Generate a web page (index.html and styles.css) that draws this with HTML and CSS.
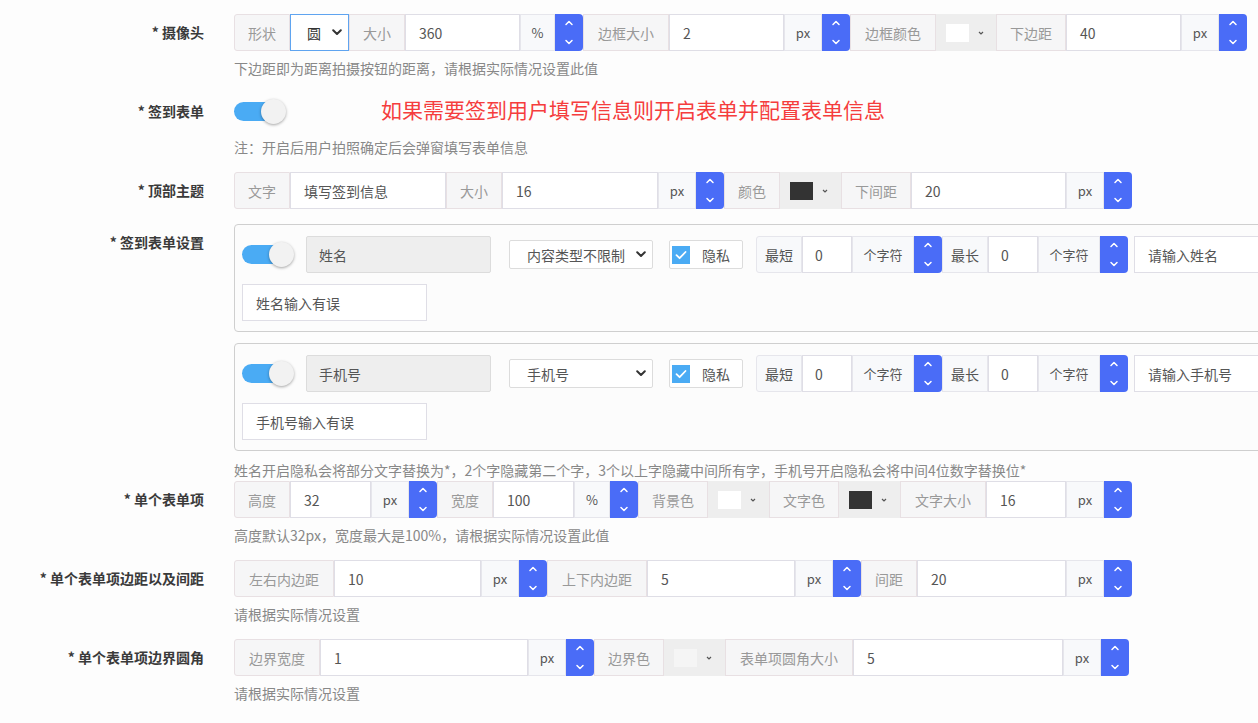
FILE: index.html
```html
<!DOCTYPE html>
<html lang="zh-CN">
<head>
<meta charset="utf-8">
<title>签到设置</title>
<link rel="stylesheet" href="styles.css">
</head>
<body>
<div class="form">

  <div class="row">
    <div class="lbl">* 摄像头</div>
    <div class="ctl">
      <div class="ig">
        <span class="ad first">形状</span>
        <span class="sel w59">圆<svg class="chev" width="10" height="7" viewBox="0 0 10 7"><path d="M1.2 1.2 L5 5 L8.8 1.2"/></svg></span>
        <span class="ad">大小</span>
        <span class="in w115">360</span>
        <span class="un w35">%</span>
        <span class="sp"><svg width="28" height="37" viewBox="0 0 28 37"><path d="M11 10.5 L14 7.5 L17 10.5"/><path d="M11 26.5 L14 29.5 L17 26.5"/></svg></span>
        <span class="ad a4">边框大小</span>
        <span class="in w115">2</span>
        <span class="un">px</span>
        <span class="sp"><svg width="28" height="37" viewBox="0 0 28 37"><path d="M11 10.5 L14 7.5 L17 10.5"/><path d="M11 26.5 L14 29.5 L17 26.5"/></svg></span>
        <span class="ad a4">边框颜色</span>
        <span class="cp cp60"><i class="sw sw-white"></i><svg class="cchev" width="6" height="4" viewBox="0 0 6 4"><path d="M1 1 L3 3 L5 1"/></svg></span>
        <span class="ad a3">下边距</span>
        <span class="in w115">40</span>
        <span class="un">px</span>
        <span class="sp"><svg width="28" height="37" viewBox="0 0 28 37"><path d="M11 10.5 L14 7.5 L17 10.5"/><path d="M11 26.5 L14 29.5 L17 26.5"/></svg></span>
      </div>
      <div class="help">下边距即为距离拍摄按钮的距离，请根据实际情况设置此值</div>
    </div>
  </div>

  <div class="row">
    <div class="lbl">* 签到表单</div>
    <div class="ctl">
      <div class="line">
        <span class="switch"><i class="track"></i><i class="knob"></i></span>
        <span class="notice">如果需要签到用户填写信息则开启表单并配置表单信息</span>
      </div>
      <div class="help">注：开启后用户拍照确定后会弹窗填写表单信息</div>
    </div>
  </div>

  <div class="row">
    <div class="lbl">* 顶部主题</div>
    <div class="ctl">
      <div class="ig">
        <span class="ad first">文字</span>
        <span class="in w156">填写签到信息</span>
        <span class="ad">大小</span>
        <span class="in w156">16</span>
        <span class="un">px</span>
        <span class="sp"><svg width="28" height="37" viewBox="0 0 28 37"><path d="M11 10.5 L14 7.5 L17 10.5"/><path d="M11 26.5 L14 29.5 L17 26.5"/></svg></span>
        <span class="ad">颜色</span>
        <span class="cp"><i class="sw sw-dark"></i><svg class="cchev" width="6" height="4" viewBox="0 0 6 4"><path d="M1 1 L3 3 L5 1"/></svg></span>
        <span class="ad a3">下间距</span>
        <span class="in w155">20</span>
        <span class="un">px</span>
        <span class="sp"><svg width="28" height="37" viewBox="0 0 28 37"><path d="M11 10.5 L14 7.5 L17 10.5"/><path d="M11 26.5 L14 29.5 L17 26.5"/></svg></span>
      </div>
    </div>
  </div>

  <div class="row tight">
    <div class="lbl">* 签到表单设置</div>
    <div class="ctl">
      <div class="card">
        <div class="cline">
          <span class="switch"><i class="track"></i><i class="knob"></i></span>
          <span class="dis">姓名</span>
          <span class="csel">内容类型不限制<svg class="chev" width="10" height="7" viewBox="0 0 10 7"><path d="M1.2 1.2 L5 5 L8.8 1.2"/></svg></span>
          <span class="chk"><i class="box"><svg width="18" height="18" viewBox="0 0 18 18"><path d="M4.5 9.2 L7.6 12.2 L13.5 6"/></svg></i>隐私</span>
          <div class="ig cg">
            <span class="ad first">最短</span>
            <span class="in w50">0</span>
            <span class="un u3">个字符</span>
            <span class="sp"><svg width="28" height="37" viewBox="0 0 28 37"><path d="M11 10.5 L14 7.5 L17 10.5"/><path d="M11 26.5 L14 29.5 L17 26.5"/></svg></span>
            <span class="ad">最长</span>
            <span class="in w50">0</span>
            <span class="un u3">个字符</span>
            <span class="sp"><svg width="28" height="37" viewBox="0 0 28 37"><path d="M11 10.5 L14 7.5 L17 10.5"/><path d="M11 26.5 L14 29.5 L17 26.5"/></svg></span>
          </div>
          <span class="in ph">请输入姓名</span>
        </div>
        <div class="cline">
          <span class="in w185">姓名输入有误</span>
        </div>
      </div>

      <div class="card">
        <div class="cline">
          <span class="switch"><i class="track"></i><i class="knob"></i></span>
          <span class="dis">手机号</span>
          <span class="csel">手机号<svg class="chev" width="10" height="7" viewBox="0 0 10 7"><path d="M1.2 1.2 L5 5 L8.8 1.2"/></svg></span>
          <span class="chk"><i class="box"><svg width="18" height="18" viewBox="0 0 18 18"><path d="M4.5 9.2 L7.6 12.2 L13.5 6"/></svg></i>隐私</span>
          <div class="ig cg">
            <span class="ad first">最短</span>
            <span class="in w50">0</span>
            <span class="un u3">个字符</span>
            <span class="sp"><svg width="28" height="37" viewBox="0 0 28 37"><path d="M11 10.5 L14 7.5 L17 10.5"/><path d="M11 26.5 L14 29.5 L17 26.5"/></svg></span>
            <span class="ad">最长</span>
            <span class="in w50">0</span>
            <span class="un u3">个字符</span>
            <span class="sp"><svg width="28" height="37" viewBox="0 0 28 37"><path d="M11 10.5 L14 7.5 L17 10.5"/><path d="M11 26.5 L14 29.5 L17 26.5"/></svg></span>
          </div>
          <span class="in ph">请输入手机号</span>
        </div>
        <div class="cline">
          <span class="in w185">手机号输入有误</span>
        </div>
      </div>
      <div class="help help-card">姓名开启隐私会将部分文字替换为*，2个字隐藏第二个字，3个以上字隐藏中间所有字，手机号开启隐私会将中间4位数字替换位*</div>
    </div>
  </div>

  <div class="row">
    <div class="lbl">* 单个表单项</div>
    <div class="ctl">
      <div class="ig">
        <span class="ad first">高度</span>
        <span class="in w81">32</span>
        <span class="un">px</span>
        <span class="sp"><svg width="28" height="37" viewBox="0 0 28 37"><path d="M11 10.5 L14 7.5 L17 10.5"/><path d="M11 26.5 L14 29.5 L17 26.5"/></svg></span>
        <span class="ad">宽度</span>
        <span class="in w81">100</span>
        <span class="un w36">%</span>
        <span class="sp"><svg width="28" height="37" viewBox="0 0 28 37"><path d="M11 10.5 L14 7.5 L17 10.5"/><path d="M11 26.5 L14 29.5 L17 26.5"/></svg></span>
        <span class="ad a3">背景色</span>
        <span class="cp"><i class="sw sw-white"></i><svg class="cchev" width="6" height="4" viewBox="0 0 6 4"><path d="M1 1 L3 3 L5 1"/></svg></span>
        <span class="ad a3">文字色</span>
        <span class="cp"><i class="sw sw-dark"></i><svg class="cchev" width="6" height="4" viewBox="0 0 6 4"><path d="M1 1 L3 3 L5 1"/></svg></span>
        <span class="ad a4">文字大小</span>
        <span class="in w80">16</span>
        <span class="un">px</span>
        <span class="sp"><svg width="28" height="37" viewBox="0 0 28 37"><path d="M11 10.5 L14 7.5 L17 10.5"/><path d="M11 26.5 L14 29.5 L17 26.5"/></svg></span>
      </div>
      <div class="help">高度默认32px，宽度最大是100%，请根据实际情况设置此值</div>
    </div>
  </div>

  <div class="row">
    <div class="lbl">* 单个表单项边距以及间距</div>
    <div class="ctl">
      <div class="ig">
        <span class="ad first a4">左右内边距</span>
        <span class="in w147">10</span>
        <span class="un">px</span>
        <span class="sp"><svg width="28" height="37" viewBox="0 0 28 37"><path d="M11 10.5 L14 7.5 L17 10.5"/><path d="M11 26.5 L14 29.5 L17 26.5"/></svg></span>
        <span class="ad a4">上下内边距</span>
        <span class="in w148">5</span>
        <span class="un">px</span>
        <span class="sp"><svg width="28" height="37" viewBox="0 0 28 37"><path d="M11 10.5 L14 7.5 L17 10.5"/><path d="M11 26.5 L14 29.5 L17 26.5"/></svg></span>
        <span class="ad">间距</span>
        <span class="in w149">20</span>
        <span class="un">px</span>
        <span class="sp"><svg width="28" height="37" viewBox="0 0 28 37"><path d="M11 10.5 L14 7.5 L17 10.5"/><path d="M11 26.5 L14 29.5 L17 26.5"/></svg></span>
      </div>
      <div class="help">请根据实际情况设置</div>
    </div>
  </div>

  <div class="row">
    <div class="lbl">* 单个表单项边界圆角</div>
    <div class="ctl">
      <div class="ig">
        <span class="ad first a4">边界宽度</span>
        <span class="in w208">1</span>
        <span class="un">px</span>
        <span class="sp"><svg width="28" height="37" viewBox="0 0 28 37"><path d="M11 10.5 L14 7.5 L17 10.5"/><path d="M11 26.5 L14 29.5 L17 26.5"/></svg></span>
        <span class="ad a3">边界色</span>
        <span class="cp"><i class="sw sw-light"></i><svg class="cchev" width="6" height="4" viewBox="0 0 6 4"><path d="M1 1 L3 3 L5 1"/></svg></span>
        <span class="ad a4">表单项圆角大小</span>
        <span class="in w210">5</span>
        <span class="un">px</span>
        <span class="sp"><svg width="28" height="37" viewBox="0 0 28 37"><path d="M11 10.5 L14 7.5 L17 10.5"/><path d="M11 26.5 L14 29.5 L17 26.5"/></svg></span>
      </div>
      <div class="help">请根据实际情况设置</div>
    </div>
  </div>

</div>
</body>
</html>
```

FILE: styles.css
```css
html {
  overflow: hidden;
}
body {
  margin: 0;
  background: #fdfdfd;
  font-family: "Noto Sans CJK SC", "Noto Sans", sans-serif;
  font-size: 14px;
  color: #333;
}
.form {
  padding-top: 14px;
}
.row {
  display: flex;
  align-items: flex-start;
  margin-bottom: 15px;
}
.row.tight {
  margin-bottom: 1px;
}
.lbl {
  flex: none;
  width: 234px;
  box-sizing: border-box;
  padding-right: 30px;
  text-align: right;
  line-height: 37px;
  font-weight: 700;
  color: #3a3a3a;
  white-space: nowrap;
}
.ctl {
  flex: 1;
  min-width: 0;
}
.help {
  margin-top: 8px;
  line-height: 19px;
  color: #888;
  white-space: nowrap;
}
.help-card {
  margin-top: 10px;
}

/* input group */
.ig {
  display: flex;
  height: 37px;
}
.ig > span {
  box-sizing: border-box;
  height: 37px;
  display: flex;
  align-items: center;
  flex: none;
  white-space: nowrap;
}
.ad {
  padding: 0 13px;
  background: #f6f6f7;
  color: #999;
  border: 1px solid #e8e0e3;
}
.ad.a3 {
  padding: 0 13px;
}
.ad.a4 {
  padding: 0 14px;
}
.ad.first {
  border-radius: 3px 0 0 3px;
}
.in {
  box-sizing: border-box;
  height: 37px;
  display: flex;
  align-items: center;
  flex: none;
  padding-left: 13px;
  background: #fff;
  border: 1px solid #dfdee6;
  color: #555;
  white-space: nowrap;
}
.un {
  width: 38px;
  justify-content: center;
  background: #f8f9fb;
  border: 1px solid #e6e6ec;
  color: #555;
  font-size: 13px;
}
.sp {
  width: 28px;
  justify-content: center;
  background: #4a6cf7;
  border-radius: 0 4px 4px 0;
}
.sp svg {
  display: block;
}
.sp path {
  fill: none;
  stroke: #fff;
  stroke-width: 1.5;
  stroke-linecap: round;
  stroke-linejoin: round;
}
.sel {
  padding-left: 16px;
  background: #fff;
  border: 1px solid #5fa4f0;
  color: #333;
  justify-content: space-between;
  padding-right: 6px;
}
.chev path {
  fill: none;
  stroke: #333;
  stroke-width: 2;
  stroke-linecap: round;
  stroke-linejoin: round;
}
.cp {
  width: 61px;
  background: #eeeeee;
  padding-left: 10px;
}
.cp.cp60 {
  width: 60px;
}
.sw {
  display: block;
  width: 23px;
  height: 18px;
}
.sw-white { background: #fff; }
.sw-dark { background: #333; }
.sw-light { background: #f5f5f5; }
.cchev {
  margin-left: 9px;
}
.cchev path {
  fill: none;
  stroke: #555;
  stroke-width: 1.2;
}

.w35 { width: 35px; }
.w36 { width: 36px; }
.w50 { width: 50px; }
.w59 { width: 59px; }
.w80 { width: 80px; }
.w81 { width: 81px; }
.w115 { width: 115px; }
.w147 { width: 147px; }
.w148 { width: 148px; }
.w149 { width: 149px; }
.w155 { width: 155px; }
.w156 { width: 156px; }
.w185 { width: 185px; }
.w208 { width: 208px; }
.w210 { width: 210px; }

/* switch */
.line {
  display: flex;
  align-items: center;
  height: 37px;
}
.switch {
  position: relative;
  flex: none;
  width: 52px;
  height: 25px;
}
.track {
  position: absolute;
  left: 0;
  top: 3px;
  width: 48px;
  height: 19px;
  border-radius: 10px;
  background: #4aabf4;
}
.knob {
  position: absolute;
  right: 0;
  top: 0;
  width: 25px;
  height: 25px;
  border-radius: 50%;
  background: #f2f2f2;
  box-shadow: 0 1px 3px rgba(0, 0, 0, 0.35);
}
.notice {
  margin-left: 95px;
  margin-bottom: 5px;
  font-size: 21px;
  color: #f53d3d;
  white-space: nowrap;
}

/* card */
.card {
  width: 1100px;
  border: 1px solid #cfcfcf;
  border-radius: 4px;
  padding: 11px 7px 10px;
  margin-bottom: 11px;
  background: #fcfcfc;
}
.card + .card {
  margin-bottom: 0;
}
.cline {
  display: flex;
  align-items: center;
  height: 37px;
}
.cline + .cline {
  margin-top: 11px;
}
.dis {
  box-sizing: border-box;
  flex: none;
  width: 185px;
  height: 37px;
  margin-left: 12px;
  padding-left: 12px;
  display: flex;
  align-items: center;
  background: #eeeeee;
  border: 1px solid #dcdcdc;
  border-radius: 2px;
  color: #555;
}
.csel {
  box-sizing: border-box;
  flex: none;
  width: 144px;
  height: 29px;
  margin-left: 18px;
  padding: 0 6px 0 17px;
  display: flex;
  align-items: center;
  justify-content: space-between;
  background: #fff;
  border: 1px solid #dcdcdc;
  border-radius: 2px;
  color: #555;
}
.chk {
  box-sizing: border-box;
  flex: none;
  width: 74px;
  height: 29px;
  margin-left: 16px;
  padding-left: 2px;
  display: flex;
  align-items: center;
  background: #fff;
  border: 1px solid #dcdcdc;
  border-radius: 2px;
  color: #555;
}
.box {
  display: block;
  width: 18px;
  height: 18px;
  margin-right: 12px;
  background: #4aabf4;
}
.box svg {
  display: block;
}
.box path {
  fill: none;
  stroke: #fff;
  stroke-width: 1.8;
  stroke-linecap: round;
  stroke-linejoin: round;
}
.cg {
  margin-left: 13px;
}
.cg .ad {
  padding: 0 8px;
  background: #f8f9fb;
  color: #555;
  border-color: #e6e6ec;
}
.cg .in {
  padding-left: 12px;
}
.u3 {
  width: 62px;
  font-size: 13px;
  color: #555;
}
.ph {
  width: 185px;
  margin-left: 6px;
}
```
